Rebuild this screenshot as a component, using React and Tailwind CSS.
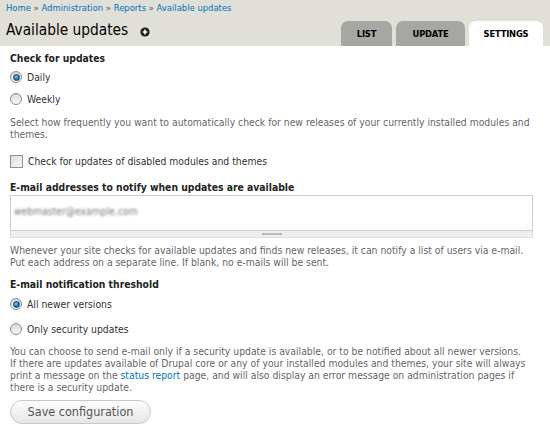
import React from 'react';

const Radio = ({ checked }) => (
  <span className="flex h-[12px] w-[12px] shrink-0 items-center justify-center rounded-full border border-[#8a8b8c] bg-gradient-to-b from-[#d8d8d8] to-[#fbfbfb]">
    {checked && (
      <span className="h-[7px] w-[7px] rounded-full border border-[#13405f] bg-[radial-gradient(circle_at_40%_35%,#7fc4f4,#1a72b5_60%,#0d4f82)]" />
    )}
  </span>
);

const RadioRow = ({ checked, label, className }) => (
  <label className={`flex items-center gap-[5px] leading-[14px] text-[#333] ${className}`}>
    <Radio checked={checked} />
    <span>{label}</span>
  </label>
);

const tabs = [
  { name: 'LIST', w: 'w-[51px]' },
  { name: 'UPDATE', w: 'w-[69px]' },
  { name: 'SETTINGS', w: 'w-[74px]', active: true },
];

const App = () => {
  return (
    <div className="h-[430px] w-[550px] overflow-hidden bg-white font-['DejaVu_Sans_Condensed','DejaVu_Sans',sans-serif] text-[10.3px]">
      <header className="flex h-[46px] flex-col bg-[#e0e0d8] pl-[6px] pr-[7px]">
        <div className="mt-[1px] leading-[14px] text-[9.4px] text-[#0074bd]">
          <a href="#">Home</a> <span className="text-[#555]">»</span>{' '}
          <a href="#">Administration</a> <span className="text-[#555]">»</span>{' '}
          <a href="#">Reports</a> <span className="text-[#555]">»</span>{' '}
          <a href="#">Available updates</a>
        </div>
        <div className="flex flex-1 items-end justify-between">
          <div className="mb-[6px] flex items-center gap-[12px] self-end">
            <h1 className="text-[15.3px] font-normal leading-[20px] text-[#000]">Available updates</h1>
            <svg width="10" height="10" viewBox="0 0 10 10" className="mt-[4px]">
              <circle cx="5" cy="5" r="4.6" fill="#1a1a1a" />
              <path d="M5 2.6v4.8M2.6 5h4.8" stroke="#fff" strokeWidth="1.6" />
            </svg>
          </div>
          <ul className="flex gap-[4px]">
            {tabs.map((t) => (
              <li
                key={t.name}
                className={`flex h-[25px] items-center justify-center rounded-t-[7px] text-[9.3px] font-bold tracking-[-0.2px] text-black ${t.w} ${
                  t.active ? 'bg-white' : 'bg-[#a6a7a2]'
                }`}
              >
                {t.name}
              </li>
            ))}
          </ul>
        </div>
      </header>

      <form className="w-[533px] pl-[10px] text-[#333]">
        <h3 className="mt-[5px] font-bold leading-[14px] text-[#222]">Check for updates</h3>
        <RadioRow checked label="Daily" className="mt-[5px]" />
        <RadioRow label="Weekly" className="mt-[8px]" />
        <p className="mt-[10px] leading-[12px] text-[#666]">
          Select how frequently you want to automatically check for new releases of your currently installed modules and themes.
        </p>

        <label className="mt-[14px] flex items-center gap-[5px] leading-[14px]">
          <span className="h-[13px] w-[13px] shrink-0 border border-[#8f8f8f] bg-gradient-to-br from-[#dcdcdc] to-[#f7f7f7]" />
          <span>Check for updates of disabled modules and themes</span>
        </label>

        <h3 className="mt-[12px] font-bold leading-[14px] text-[#222]">E-mail addresses to notify when updates are available</h3>
        <div className="mt-[1px]">
          <div className="relative h-[36px] border border-[#ccc] bg-white px-[3px] pt-[8px]">
            <span className="block leading-[14px] text-[#777] blur-[1.2px]">webmaster@example.com</span>
            <span className="absolute bottom-[2px] right-[3px] text-[6px] leading-[6px] tracking-[-1px] text-[#aaa]">⋰</span>
          </div>
          <div className="flex h-[7px] items-center justify-center border border-t-0 border-[#ddd] bg-[#eee]">
            <span className="h-[2px] w-[20px] border-y border-[#bbb]" />
          </div>
        </div>
        <p className="mt-[6px] leading-[12px] text-[#666]">
          Whenever your site checks for available updates and finds new releases, it can notify a list of users via e-mail. Put each address on a separate line. If blank, no e-mails will be sent.
        </p>

        <h3 className="mt-[9px] font-bold leading-[14px] text-[#222]">E-mail notification threshold</h3>
        <RadioRow checked label="All newer versions" className="mt-[6px]" />
        <RadioRow label="Only security updates" className="mt-[11px]" />
        <p className="mt-[9px] leading-[12px] text-[#666]">
          You can choose to send e-mail only if a security update is available, or to be notified about all newer versions.
          <br />
          If there are updates available of Drupal core or any of your installed modules and themes, your site will always
          <br />
          print a message on the <a href="#" className="text-[#0074bd]">status report</a> page, and will also display an error message on administration pages if
          <br />
          there is a security update.
        </p>

        <button
          type="button"
          className="mt-[7px] h-[24px] w-[141px] rounded-full border border-[#c8c8c8] bg-gradient-to-b from-[#fdfdfd] to-[#e6e6e6] text-[12.5px] text-[#555]"
        >
          Save configuration
        </button>
      </form>
    </div>
  );
};

export default App;
